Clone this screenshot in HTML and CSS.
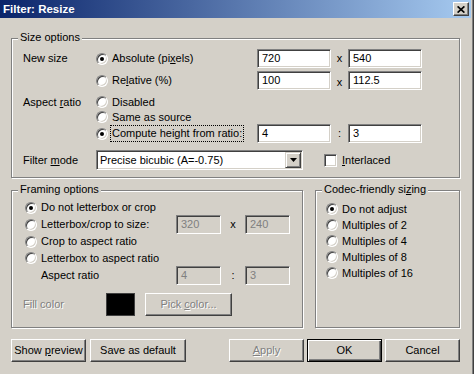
FILE: index.html
```html
<!DOCTYPE html>
<html lang="en">
<head>
  <meta charset="UTF-8">
  <meta name="viewport" content="width=device-width, initial-scale=1.0">
  <title>Filter: Resize</title>
  <link rel="stylesheet" href="styles.css">
</head>
<body>
  <div id="dlg">
    <div class="caption">
      <span class="caption-text">Filter: Resize</span>
      <span class="close-btn">
        <svg width="8" height="7" viewBox="0 0 8 7"><path d="M0.6 0.4 L7.4 6.6 M7.4 0.4 L0.6 6.6" stroke="#000" stroke-width="1.7" fill="none"/></svg>
      </span>
    </div>

    <div class="dlg-body">
      <!-- size options -->
      <div class="group size-box">
        <div class="group-title">Size options</div>
        <div class="size-grid">
          <div class="cell h19">New size</div>
          <div class="cell h19"><span class="radio on"></span><span>Absolute (pi<u>x</u>els)</span></div>
          <div class="field">720</div>
          <div class="cell h19 sep">x</div>
          <div class="field">540</div>

          <div></div>
          <div class="cell h19"><span class="radio"></span><span>Re<u>l</u>ative (%)</span></div>
          <div class="field">100</div>
          <div class="cell h19 sep sep-low">x</div>
          <div class="field">112.5</div>

          <div class="cell"><span>Aspect <u>r</u>atio</span></div>
          <div class="cell wide"><span class="radio"></span>Disabled</div>

          <div></div>
          <div class="cell wide"><span class="radio"></span>Same as source</div>

          <div></div>
          <div class="cell h19"><span class="radio on"></span><span class="focus">Compute height from ratio:</span></div>
          <div class="field">4</div>
          <div class="cell h19 sep">:</div>
          <div class="field">3</div>

          <div class="filter-row">
            <span class="filter-label">Filter <u>m</u>ode</span>
            <div class="combo">
              <span class="combo-text">Precise bicubic (A=-0.75)</span>
              <span class="drop"><svg width="7" height="4" viewBox="0 0 7 4"><path d="M0 0 H7 L3.5 4 Z" fill="#000"/></svg></span>
            </div>
            <span class="check"></span>
            <span><u>I</u>nterlaced</span>
          </div>
        </div>
      </div>

      <div class="lower">
        <!-- framing -->
        <div class="group framing-box">
          <div class="group-title">Framing options</div>
          <div class="framing-grid">
            <div class="cell wide"><span class="radio on"></span>Do not letterbox or crop</div>

            <div class="cell"><span class="radio"></span>Letterbox/crop to size:</div>
            <div class="field off">320</div>
            <div class="cell sep">x</div>
            <div class="field off">240</div>

            <div class="cell wide"><span class="radio"></span>Crop to aspect ratio</div>
            <div class="cell wide"><span class="radio"></span>Letterbox to aspect ratio</div>

            <div class="cell indent">Aspect ratio</div>
            <div class="field off">4</div>
            <div class="cell sep">:</div>
            <div class="field off">3</div>
          </div>
          <div class="fill-row">
            <span class="fill-label disabled">Fill color</span>
            <span class="swatch"></span>
            <span class="btn pick disabled"><span>Pick <u>c</u>olor...</span></span>
          </div>
        </div>

        <!-- codec -->
        <div class="group codec-box">
          <div class="group-title">Codec-friendly si<u>z</u>ing</div>
          <div class="codec-list">
            <div class="cell"><span class="radio on"></span>Do not adjust</div>
            <div class="cell"><span class="radio"></span>Multiples of 2</div>
            <div class="cell"><span class="radio"></span>Multiples of 4</div>
            <div class="cell"><span class="radio"></span>Multiples of 8</div>
            <div class="cell"><span class="radio"></span>Multiples of 16</div>
          </div>
        </div>
      </div>

      <div class="buttons">
        <span class="btn"><span>Show <u>p</u>review</span></span>
        <span class="btn save">Save as default</span>
        <span class="btn apply disabled"><span><u>A</u>pply</span></span>
        <span class="btn default">OK</span>
        <span class="btn">Cancel</span>
      </div>
    </div>
  </div>
</body>
</html>
```

FILE: styles.css
```css
* { margin: 0; padding: 0; box-sizing: border-box; }
body {
  width: 474px;
  height: 374px;
  background: #d4d0c8;
  font-family: "Liberation Sans", Arial, sans-serif;
  font-size: 11px;
  line-height: 13px;
  color: #000;
  overflow: hidden;
}
#dlg {
  width: 474px;
  height: 374px;
  background: #d4d0c8;
  border-right: 1px solid #404040;
  box-shadow: inset -1px 0 #808080;
}

/* title bar */
.caption {
  height: 18px;
  margin-right: 2px;
  display: flex;
  align-items: center;
  padding-left: 3px;
  background: linear-gradient(to right, #0a246a, #a6caf0);
}
.caption-text {
  color: #fff;
  font-weight: bold;
  font-size: 11.5px;
}
.close-btn {
  margin-left: auto;
  margin-right: 2px;
  width: 16px;
  height: 14px;
  display: flex;
  align-items: center;
  justify-content: center;
  background: #d4d0c8;
  border: 1px solid;
  border-color: #fff #404040 #404040 #fff;
  box-shadow: inset -1px -1px #808080;
}

.dlg-body {
  padding: 20px 0 0 11px;
}

/* group boxes */
.group {
  border: 1px solid #808080;
  box-shadow: inset 1px 1px #fff, 1px 1px #fff;
}
.group-title {
  width: fit-content;
  margin: -8px 0 0 6px;
  padding: 0 2px;
  background: #d4d0c8;
}
.size-box {
  width: 449px;
  padding-bottom: 7px;
}
.size-grid {
  display: grid;
  grid-template-columns: 73px 161px 74px 17px 74px;
  grid-template-rows: 22px 23px 16px 14px 26px 20px;
  margin: 5px 0 0 11px;
}
.cell {
  display: flex;
  align-items: center;
  white-space: nowrap;
}
.h19 { height: 19px; }
.wide { grid-column: 2 / -1; }
.sep { justify-content: center; }
.sep-low { padding-top: 3px; }
.focus {
  outline: 1px dotted #000;
  padding: 1px 1px;
  margin-left: -1px;
}

/* controls */
.radio {
  flex: none;
  width: 12px;
  height: 12px;
  margin-right: 4px;
  border-radius: 50%;
  background: #fff;
  border: 1px solid;
  border-color: #808080 #fff #fff #808080;
  box-shadow: inset 1px 1px #404040, inset -1px -1px #d4d0c8;
  display: flex;
  align-items: center;
  justify-content: center;
}
.radio.on::after {
  content: "";
  width: 4px;
  height: 4px;
  border-radius: 50%;
  background: #000;
}
.field {
  height: 19px;
  display: flex;
  align-items: center;
  padding-left: 4px;
  background: #fff;
  border: 1px solid;
  border-color: #808080 #fff #fff #808080;
  box-shadow: inset 1px 1px #404040, inset -1px -1px #d4d0c8;
}
.field.off {
  background: #d4d0c8;
  color: #808080;
  align-self: center;
}
.check {
  width: 13px;
  height: 13px;
  margin: 0 5px 0 21px;
  background: #fff;
  border: 1px solid;
  border-color: #808080 #fff #fff #808080;
  box-shadow: inset 1px 1px #404040, inset -1px -1px #d4d0c8;
}
.filter-row {
  grid-column: 1 / -1;
  display: flex;
  align-items: center;
}
.filter-label { width: 73px; }
.combo {
  width: 207px;
  height: 20px;
  display: flex;
  align-items: center;
  padding: 0 0 0 2px;
  background: #fff;
  border: 1px solid;
  border-color: #808080 #fff #fff #808080;
  box-shadow: inset 1px 1px #404040, inset -1px -1px #d4d0c8;
}
.combo-text { padding-left: 1px; }
.drop {
  margin-left: auto;
  margin-right: 1px;
  width: 16px;
  height: 16px;
  display: flex;
  align-items: center;
  justify-content: center;
  background: #d4d0c8;
  border: 1px solid;
  border-color: #d4d0c8 #404040 #404040 #d4d0c8;
  box-shadow: inset 1px 1px #fff, inset -1px -1px #808080;
}

/* lower groups */
.lower {
  display: flex;
  gap: 12px;
  margin-top: 12px;
}
.framing-box {
  width: 292px;
  height: 138px;
}
.codec-box {
  width: 145px;
  height: 138px;
}
.framing-grid {
  display: grid;
  grid-template-columns: 151px 45px 24px 45px;
  grid-template-rows: 17px 17px 17px 16px 19px;
  margin: 3px 0 0 13px;
}
.framing-grid .wide { grid-column: 1 / -1; }
.indent { padding-left: 16px; }
.fill-row {
  display: flex;
  align-items: center;
  margin-top: 8px;
  padding-left: 11px;
}
.fill-label { width: 83px; }
.swatch {
  width: 29px;
  height: 23px;
  background: #000;
  border: 1px solid #404040;
}
.disabled {
  color: #808080;
  text-shadow: 1px 1px #fff;
}
.codec-list {
  margin: 5px 0 0 10px;
}
.codec-list .cell { height: 16px; }

/* buttons */
.btn {
  height: 23px;
  width: 75px;
  display: flex;
  align-items: center;
  justify-content: center;
  white-space: nowrap;
  background: #d4d0c8;
  border: 1px solid;
  border-color: #fff #404040 #404040 #fff;
  box-shadow: inset -1px -1px #808080;
}
.btn.pick {
  width: 87px;
  margin-left: 10px;
}
.btn.default {
  border-color: #000;
  box-shadow: inset 1px 1px #fff, inset -1px -1px #404040, inset -2px -2px #808080;
}
.buttons {
  display: flex;
  gap: 3px;
  margin-top: 11px;
}
.btn.save {
  width: 96px;
  margin-left: 1px;
}
.btn.apply { margin-left: auto; }
.buttons .btn:last-child { margin-right: 13px; }
```
